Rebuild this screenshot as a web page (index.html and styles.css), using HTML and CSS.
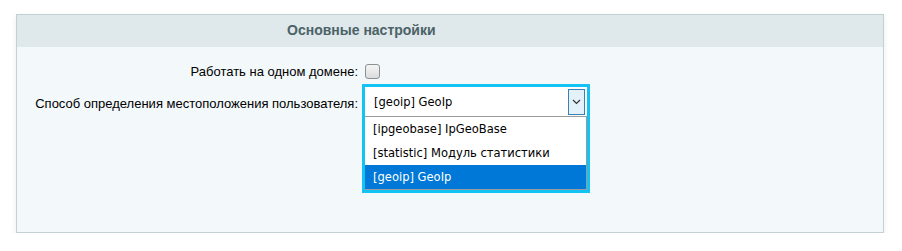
FILE: index.html
```html
<!DOCTYPE html>
<html lang="ru">
<head>
<meta charset="utf-8">
<link rel="stylesheet" href="styles.css">
</head>
<body>
<div class="panel">
  <div class="head">Основные настройки</div>
  <div class="body">
    <div class="row row-check">
      <div class="label">Работать на одном домене:</div>
      <div class="field"><span class="checkbox"></span></div>
    </div>
    <div class="row row-select">
      <div class="label">Способ определения местоположения пользователя:</div>
      <div class="field">
        <div class="focus">
          <div class="select">
            <span class="value">[geoip] GeoIp</span>
            <span class="arrow"><svg width="9" height="6" viewBox="0 0 9 6"><path d="M1 1l3.5 3.5L8 1" fill="none" stroke="#333" stroke-width="1.2"/></svg></span>
          </div>
          <ul class="list">
            <li>[ipgeobase] IpGeoBase</li>
            <li>[statistic] Модуль статистики</li>
            <li class="sel">[geoip] GeoIp</li>
          </ul>
        </div>
      </div>
    </div>
  </div>
</div>
</body>
</html>
```
FILE: styles.css
```css
html, body { margin: 0; padding: 0; background: #fff; }
body { font-family: "Liberation Sans", Arial, sans-serif; font-size: 13px; color: #000; }
.panel {
  margin: 14px 0 0 16px;
  width: 866px;
  border: 1px solid #c3d0d6;
  background: #f3f8fb;
  box-shadow: 0 2px 6px rgba(0,0,0,0.08);
}
.head {
  height: 32px;
  line-height: 31px;
  background: #dfe8ea;
  font-weight: bold;
  font-size: 14px;
  color: #4b6267;
  padding-left: 270px;
}
.body { height: 169px; padding-top: 16px; }
.row { display: grid; grid-template-columns: 345px 1fr; align-items: center; }
.label { text-align: right; padding-right: 4px; }
.row-check { height: 16px; }
.checkbox {
  display: block;
  width: 13px; height: 13px;
  margin-left: 3px;
  border: 1px solid #8a9296;
  border-radius: 3px;
  background: linear-gradient(#f5f5f5, #dcdcdc);
}
.row-select { margin-top: 5px; align-items: start; }
.row-select .label { padding-top: 12px; }
.focus {
  width: 222px;
  border: 3px solid #12c3f3;
  background: #fff;
}
.select {
  height: 29px;
  border-bottom: 1px solid #9a9a9a;
  display: flex; align-items: center;
  font-family: "DejaVu Sans Condensed", "DejaVu Sans", sans-serif;
  font-size: 12.8px;
}
.value { padding-left: 9px; flex: 1; }
.arrow {
  width: 15px; height: 24px;
  margin-right: 2px;
  background: #e3f1fb;
  border: 1px solid #3c7fb1;
  display: flex; align-items: center; justify-content: center;
}
.list {
  list-style: none; margin: 0; padding: 0;
  border-right: 1px solid #9a9a9a;
  border-bottom: 1px solid #9a9a9a;
  font-family: "DejaVu Sans Condensed", "DejaVu Sans", sans-serif;
  font-size: 12.8px;
}
.list li { height: 24px; line-height: 24px; padding-left: 8px; }
.list li.sel { background: #0078d7; color: #fff; }
```
